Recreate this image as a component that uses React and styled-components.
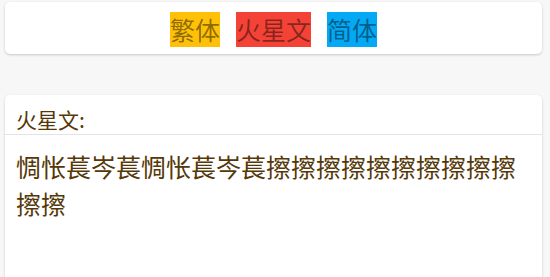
import React from "react";
import styled, { createGlobalStyle } from "styled-components";

const GlobalStyle = createGlobalStyle`
  body {
    margin: 0;
    background-color: #f7f7f7;
    font-family: "Noto Sans CJK SC", "Noto Sans", sans-serif;
    overflow: hidden;
  }
`;

const Page = styled.div`
  padding: 2px 8px 0 5px;
`;

const Card = styled.div`
  background-color: #fff;
  border-radius: 5px;
  box-shadow: 0 1px 3px rgba(0, 0, 0, 0.12), 0 1px 2px rgba(0, 0, 0, 0.08);
`;

const Toolbar = styled(Card)`
  height: 52px;
  box-sizing: border-box;
  padding-top: 10px;
  display: flex;
  justify-content: center;
  align-items: flex-start;
  gap: 16px;
`;

const ModeButton = styled.button`
  border: none;
  padding: 0;
  margin: 0;
  height: 35px;
  font-family: inherit;
  font-size: 25px;
  line-height: 35px;
  color: rgba(0, 0, 0, 0.45);
  background-color: ${(props) => props.bg};
  cursor: pointer;
`;

const ResultCard = styled(Card)`
  margin-top: 41px;
  height: 182px;
  border-radius: 5px 5px 0 0;
`;

const CardHeader = styled.div`
  padding: 12px 11px 3px;
  font-size: 21px;
  line-height: 24px;
  color: #553808;
  border-bottom: 1px solid #e3e3e3;
`;

const CardBody = styled.div`
  padding: 13px 11px 0;
  font-size: 25px;
  line-height: 37px;
  color: #553808;
  word-break: break-all;
`;

const modes = [
  { label: "繁体", bg: "#ffc107" },
  { label: "火星文", bg: "#f44336" },
  { label: "简体", bg: "#03a9f4" },
];

const App = () => {
  return (
    <Page>
      <GlobalStyle />
      <Toolbar>
        {modes.map((m) => (
          <ModeButton key={m.label} bg={m.bg}>
            {m.label}
          </ModeButton>
        ))}
      </Toolbar>
      <ResultCard>
        <CardHeader>火星文:</CardHeader>
        <CardBody>惆怅萇岑萇惆怅萇岑萇擦擦擦擦擦擦擦擦擦擦擦擦</CardBody>
      </ResultCard>
    </Page>
  );
};

export default App;
